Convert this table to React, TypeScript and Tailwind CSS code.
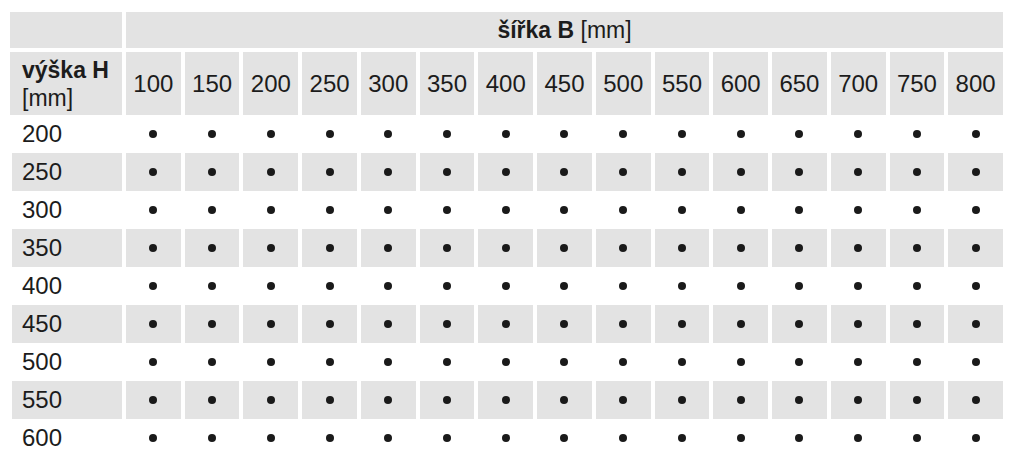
const widths = [100, 150, 200, 250, 300, 350, 400, 450, 500, 550, 600, 650, 700, 750, 800];
const heights = [200, 250, 300, 350, 400, 450, 500, 550, 600];

export default function App() {
  return (
    <div
      className="h-[462px] w-[1016px] overflow-hidden bg-white pl-[10px] pt-[12px] text-[#1c1c1c]"
      style={{ fontFamily: '"Liberation Sans", Arial, sans-serif' }}
    >
      <div className="grid w-[993px] grid-cols-[112px_repeat(15,minmax(0,1fr))] gap-x-1">
        {/* header row 1 */}
        <div className="h-[36px] bg-[#e3e3e3]" />
        <div className="col-span-15 flex h-[36px] items-center justify-center bg-[#e3e3e3] text-[23px]">
          <span className="font-bold">šířka B</span>
          <span>&nbsp;[mm]</span>
        </div>

        {/* header row 2 */}
        <div className="mt-1 flex h-[63px] flex-col justify-center bg-[#e3e3e3] pl-3 text-[23px] leading-[28px]">
          <span className="font-bold">výška H</span>
          <span>[mm]</span>
        </div>
        {widths.map((w) => (
          <div key={w} className="mt-1 flex h-[63px] items-center justify-center bg-[#e3e3e3] text-[24px]">
            {w}
          </div>
        ))}

        {/* body */}
        {heights.map((h, i) => {
          const bg = i % 2 === 1 ? "bg-[#e3e3e3]" : "bg-white";
          return [
            <div key={`l${h}`} className={`ml-[2px] flex h-[38px] items-center pl-[10px] text-[24px] ${bg}`}>
              {h}
            </div>,
            ...widths.map((w) => (
              <div key={`${h}-${w}`} className={`flex h-[38px] items-center justify-center ${bg}`}>
                <span className="h-2 w-2 rounded-full bg-[#1a1a1a]" />
              </div>
            )),
          ];
        })}
      </div>
    </div>
  );
}
